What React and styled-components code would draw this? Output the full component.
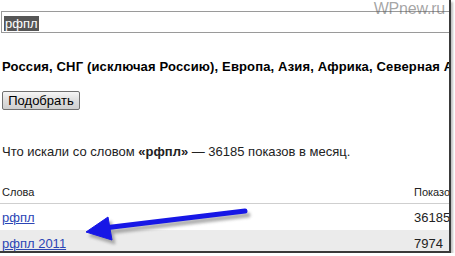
import styled, { createGlobalStyle } from 'styled-components';

const GlobalStyle = createGlobalStyle`
	html, body {
		margin: 0;
		padding: 0;
		background: #fff;
	}
	body {
		font-family: 'Liberation Sans', Arial, sans-serif;
		color: #000;
	}
`;

const Frame = styled.div`
	position: relative;
	box-sizing: border-box;
	width: 451px;
	height: 253px;
	border-right: 2px solid #3a3a3a;
	border-bottom: 2px solid #3a3a3a;
	box-shadow: 2px 2px 2px rgba(0, 0, 0, 0.25);
	overflow: hidden;
	background: #fff;
`;

const Content = styled.div`
	display: flex;
	flex-direction: column;
	padding-top: 11px;
	width: 520px;
`;

const Watermark = styled.div`
	position: absolute;
	top: 0;
	right: 4px;
	font-size: 16px;
	color: rgba(90, 90, 90, 0.55);
	letter-spacing: -0.2px;
	z-index: 2;
`;

const SearchBox = styled.div`
	box-sizing: border-box;
	height: 22px;
	margin-left: 1px;
	border: 1px solid #9a9a9a;
	padding: 4px 0 0 2px;
	font-size: 13px;
	line-height: 15px;
`;

const Selected = styled.span`
	background: #565656;
	color: #fff;
	padding: 0 1px;
`;

const Regions = styled.div`
	margin-top: 26px;
	padding-left: 2px;
	font-size: 13px;
	font-weight: bold;
	line-height: 15px;
	letter-spacing: 0.15px;
	white-space: nowrap;
`;

const PickButton = styled.button`
	align-self: flex-start;
	margin: 17px 0 0 2px;
	box-sizing: border-box;
	width: 78px;
	height: 19px;
	padding: 0;
	font-family: 'Liberation Sans', Arial, sans-serif;
	font-size: 13px;
	color: #000;
	border: 1px solid #707070;
	border-radius: 2px;
	background: linear-gradient(#f6f6f6, #dedede 50%, #cfcfcf);
`;

const Summary = styled.div`
	margin-top: 34px;
	padding-left: 2px;
	font-size: 13px;
	line-height: 15px;
	color: #222;
`;

const Table = styled.div`
	margin-top: 21px;
	display: flex;
	flex-direction: column;
`;

const Row = styled.div`
	display: grid;
	grid-template-columns: 412px 1fr;
	align-items: center;
	height: ${(p) => p.$h || 26}px;
	padding-left: 2px;
	background: ${(p) => (p.$shaded ? '#ebebeb' : '#fff')};
	border-bottom: ${(p) => (p.$head ? '1px solid #cfcfcf' : 'none')};
	font-size: ${(p) => (p.$head ? 11 : 13)}px;
	color: #222;
`;

const WordLink = styled.a`
	color: #2b45b5;
	text-decoration: underline;
`;

const ArrowLayer = styled.svg`
	position: absolute;
	left: 0;
	top: 0;
	pointer-events: none;
	z-index: 3;
`;

const Arrow = () => (
	<ArrowLayer width="451" height="253" viewBox="0 0 451 253">
		<defs>
			<filter id="sh" x="-20%" y="-50%" width="140%" height="200%">
				<feGaussianBlur stdDeviation="1.5" />
			</filter>
		</defs>
		<g transform="translate(3 4)" fill="#7a7a7a" stroke="#7a7a7a" opacity="0.6" filter="url(#sh)">
			<line x1="245" y1="211" x2="104" y2="228" strokeWidth="5" strokeLinecap="round" />
			<polygon points="86,232 108,217 112,240" />
		</g>
		<g fill="#1717e6" stroke="#1717e6">
			<line x1="245" y1="211" x2="104" y2="228" strokeWidth="5" strokeLinecap="round" />
			<polygon points="86,232 108,217 112,240" strokeLinejoin="round" strokeWidth="1" />
		</g>
	</ArrowLayer>
);

export default function App() {
	return (
		<>
			<GlobalStyle />
			<Frame>
				<Watermark>WPnew.ru</Watermark>
				<Content>
					<SearchBox>
						<Selected>рфпл</Selected>
					</SearchBox>
					<Regions>Россия, СНГ (исключая Россию), Европа, Азия, Африка, Северная Америка, Южная Америка</Regions>
					<PickButton>Подобрать</PickButton>
					<Summary>
						Что искали со словом <b>«рфпл»</b> — 36185 показов в месяц.
					</Summary>
					<Table>
						<Row $head $h={23}>
							<span>Слова</span>
							<span>Показов в месяц</span>
						</Row>
						<Row>
							<WordLink href="#">рфпл</WordLink>
							<span>36185</span>
						</Row>
						<Row $shaded>
							<WordLink href="#">рфпл 2011</WordLink>
							<span>7974</span>
						</Row>
					</Table>
				</Content>
				<Arrow />
			</Frame>
		</>
	);
}
